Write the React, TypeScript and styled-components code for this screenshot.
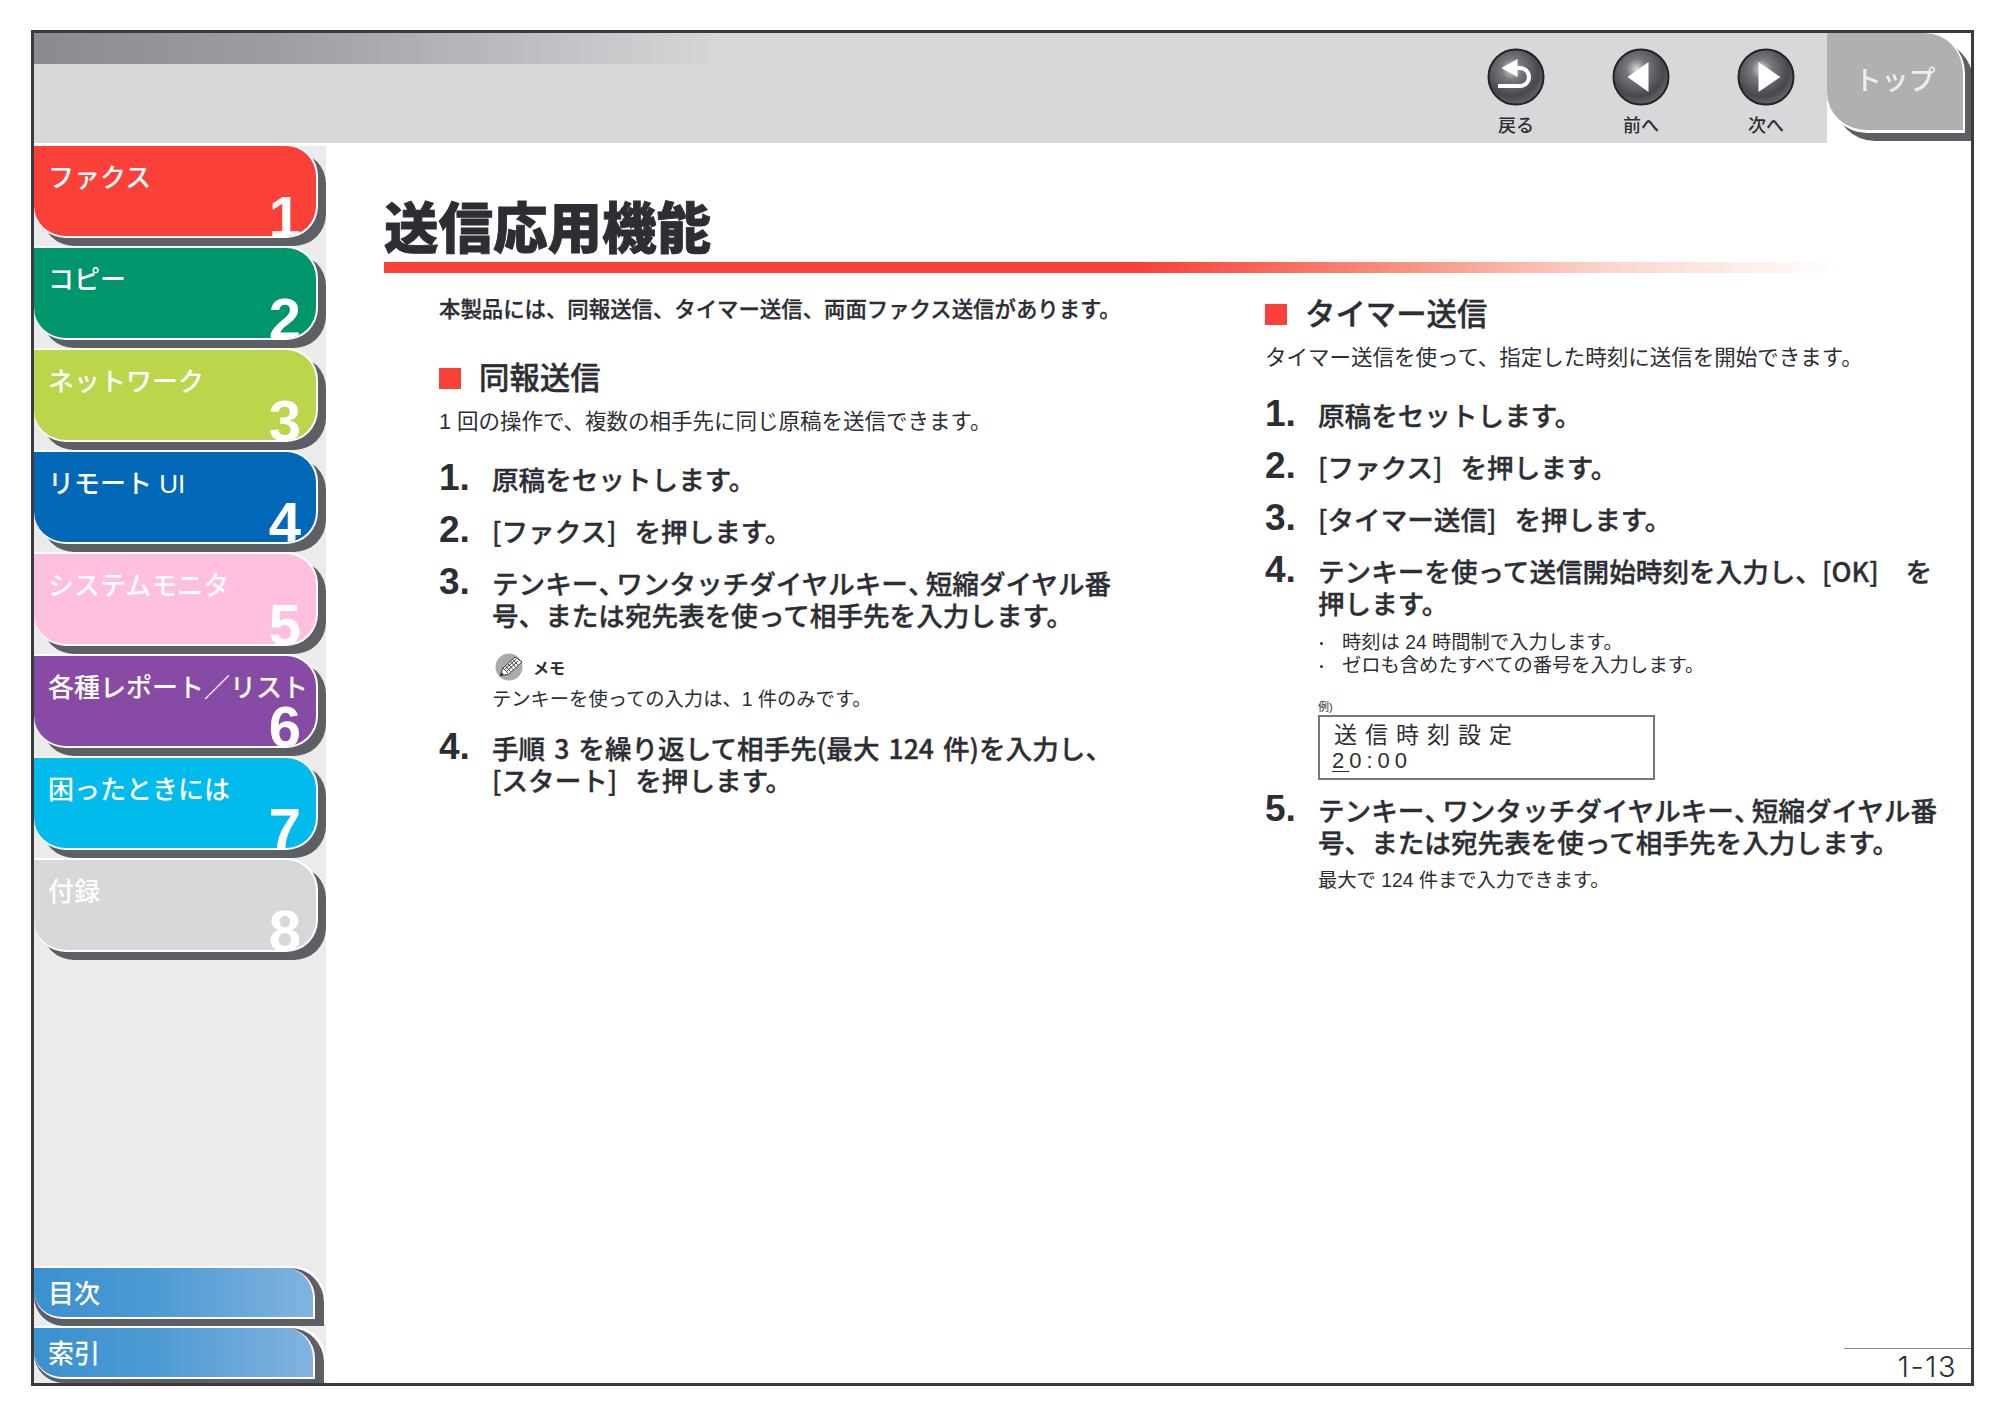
import React from "react";
import styled, { createGlobalStyle } from "styled-components";

const TEXT = "#2d2e33";
const SHADOW = "#5e5f65";
const FONT = `"Liberation Sans", "Noto Sans CJK JP", sans-serif`;
const CJK_FIRST = `"Noto Sans CJK JP", "Liberation Sans", sans-serif`;

const GlobalStyle = createGlobalStyle`
  html, body {
    margin: 0;
    padding: 0;
    background: #fff;
  }
  body {
    font-family: ${FONT};
    color: ${TEXT};
  }
`;

const Frame = styled.div`
  box-sizing: border-box;
  width: 1943px;
  height: 1356px;
  margin: 30px 0 0 31px;
  border: 3px solid #3a3b40;
  overflow: hidden;
  display: flex;
  flex-direction: column;
`;

const Header = styled.header`
  display: flex;
  height: 110px;
  flex-shrink: 0;
`;

const HeaderBar = styled.div`
  flex: 1;
  display: flex;
  justify-content: flex-end;
  gap: 3px;
  background-color: #d7d8da;
  background-image: linear-gradient(90deg, #8a8b8f 0%, #9d9ea2 35%, #d7d8da 100%);
  background-size: 695px 31px;
  background-repeat: no-repeat;
`;

const NavButton = styled.div`
  width: 122px;
  padding-top: 15px;
  display: flex;
  flex-direction: column;
  align-items: center;
`;

const NavLabel = styled.span`
  margin-top: 9px;
  font-size: 18px;
  line-height: 22px;
  font-weight: 500;
`;

const TopTab = styled.div`
  box-sizing: border-box;
  width: 138px;
  height: 100px;
  margin-right: 6px;
  padding-top: 31px;
  background: #afb0b2;
  border-right: 2px solid #fff;
  border-bottom: 3px solid #fff;
  border-radius: 0 40px 0 40px;
  box-shadow: 8px 8px 0 ${SHADOW};
  color: #eeeeef;
  font-size: 27px;
  line-height: 34px;
  font-weight: 500;
  text-align: center;
`;

const Body = styled.div`
  flex: 1;
  min-height: 0;
  display: flex;
  margin-top: 3px;
`;

const Sidebar = styled.nav`
  width: 292px;
  flex-shrink: 0;
  background: #ebebeb;
  display: flex;
  flex-direction: column;
  overflow: hidden;
`;

const ChapterTab = styled.a<{ $color: string }>`
  box-sizing: border-box;
  position: relative;
  display: block;
  width: 284px;
  height: 94px;
  margin: -2px 0 10px;
  flex-shrink: 0;
  padding: 15px 0 0 14px;
  background: ${(p) => p.$color};
  border: 2px solid #fff;
  border-left: 0;
  border-radius: 0 32px 32px 32px;
  box-shadow: 8px 8px 0 ${SHADOW};
  overflow: hidden;
  color: #fff;
  font-size: 26px;
  line-height: 34px;
  font-weight: 500;
  white-space: nowrap;
`;

const ChapterNumber = styled.span`
  position: absolute;
  right: 15px;
  top: 36px;
  font-family: "Liberation Sans", sans-serif;
  font-size: 58px;
  line-height: 70px;
  font-weight: 700;
`;

const BottomTabs = styled.div`
  margin-top: auto;
  display: flex;
  flex-direction: column;
  gap: 2px;
`;

const BottomShadow = styled.div<{ $height: number }>`
  box-sizing: border-box;
  width: 290px;
  height: ${(p) => p.$height}px;
  padding-right: 9px;
  background: ${SHADOW};
  border-radius: 0 34px 0 30px;
  box-shadow: 2px -2px 0 #fff;
  overflow: hidden;
`;

const BottomTab = styled.a`
  box-sizing: border-box;
  display: block;
  height: 51px;
  padding-left: 14px;
  background: linear-gradient(90deg, #3a91d0 0%, #4a99d3 40%, #82b3df 100%);
  border-right: 2px solid #fff;
  border-bottom: 2px solid #fff;
  border-radius: 0 30px 0 28px;
  color: #fff;
  font-size: 26px;
  line-height: 52px;
  font-weight: 500;
`;

const Main = styled.main`
  flex: 1;
  min-width: 0;
  display: flex;
  flex-direction: column;
  padding-left: 58px;
`;

const Title = styled.h1`
  margin: 54px 0 0;
  font-size: 54.5px;
  line-height: 60px;
  font-weight: 900;
  -webkit-text-stroke: 0.8px ${TEXT};
`;

const TitleRule = styled.div`
  width: 1456px;
  height: 11px;
  margin-top: 2px;
  background: linear-gradient(90deg, #fb4039 0%, #fb4039 52%, #f7927f 70%, #fcd5ca 84%, #ffffff 100%);
`;

const Columns = styled.div`
  display: grid;
  grid-template-columns: 826px 1fr;
  margin: 21px 0 0 55px;
`;

const Column = styled.section`
  min-width: 0;
`;

const Intro = styled.p`
  margin: 0 0 32px;
  font-size: 21.4px;
  line-height: 32px;
  font-weight: 500;
  -webkit-text-stroke: 0.3px ${TEXT};
  white-space: nowrap;
`;

const SectionHead = styled.h2`
  display: flex;
  align-items: center;
  gap: 18px;
  margin: 0;
  font-size: 30.4px;
  line-height: 40px;
  font-weight: 500;
  -webkit-text-stroke: 0.4px ${TEXT};
  &::before {
    content: "";
    width: 22px;
    height: 21px;
    background: #fb4039;
  }
`;

const Desc = styled.p`
  margin: 10px 0 0;
  font-size: 21.5px;
  line-height: 28px;
  white-space: nowrap;
`;

const Step = styled.div<{ $gap?: number }>`
  display: grid;
  grid-template-columns: 53px 1fr;
  margin-top: ${(p) => p.$gap ?? 20}px;
  font-family: ${CJK_FIRST};
  font-size: 26.6px;
  line-height: 32px;
  font-weight: 500;
  word-spacing: 3px;
  white-space: pre;
`;

const StepNumber = styled.span`
  font-family: "Liberation Sans", sans-serif;
  font-size: 37px;
  line-height: 28px;
  font-weight: 700;
`;

const StepText = styled.span`
  margin: -1px 0 1px;
  -webkit-text-stroke: 0.35px ${TEXT};
`;

const TightComma = styled.span`
  font-feature-settings: "halt";
  letter-spacing: 0.17em;
`;

const Indented = styled.div`
  margin-left: 53px;
`;

const MemoHead = styled.div`
  display: flex;
  align-items: center;
  gap: 10px;
  height: 28px;
  margin: 21px 0 0 3px;
  font-size: 16px;
  font-weight: 700;
`;

const Note = styled.p<{ $top?: number }>`
  margin: ${(p) => p.$top ?? 6}px 0 0;
  font-size: 19.3px;
  line-height: 26px;
  white-space: nowrap;
`;

const Bullets = styled.ul`
  margin: 12px 0 0;
  padding: 0;
  list-style: none;
`;

const Bullet = styled.li`
  position: relative;
  padding-left: 24px;
  font-size: 19.3px;
  line-height: 22.5px;
  white-space: nowrap;
  &::before {
    content: "";
    position: absolute;
    left: 2px;
    top: 10px;
    width: 3px;
    height: 3px;
    border-radius: 50%;
    background: ${TEXT};
  }
`;

const ExampleLabel = styled.div`
  margin-top: 23px;
  font-size: 11px;
  line-height: 14px;
`;

const Display = styled.div`
  box-sizing: border-box;
  width: 337px;
  height: 65px;
  margin-top: 1px;
  padding: 5px 0 0 14px;
  border: 2px solid #77787c;
  font-size: 23px;
  line-height: 26px;
  letter-spacing: 8px;
  white-space: nowrap;
`;

const DisplayTime = styled.div`
  font-size: 22px;
  line-height: 24px;
  letter-spacing: 5px;
  margin: 1px 0 0 -2px;
  u {
    text-underline-offset: 3px;
    text-decoration-thickness: 1px;
  }
`;

const PageFooter = styled.footer`
  box-sizing: border-box;
  align-self: flex-end;
  width: 127px;
  height: 35px;
  margin-top: auto;
  padding-right: 14px;
  border-top: 1px solid #8a8b8e;
  font-family: Inter, sans-serif;
  font-size: 29px;
  line-height: 35px;
  font-weight: 300;
  letter-spacing: 1.5px;
  text-align: right;
`;

const ButtonGlow = ({ id }: { id: string }) => (
  <defs>
    <radialGradient id={id} cx="0.42" cy="0.36" r="0.68">
      <stop offset="0" stopColor="#d9d9da" />
      <stop offset="0.28" stopColor="#77787c" />
      <stop offset="0.72" stopColor="#47484d" />
      <stop offset="1" stopColor="#6a6b70" />
    </radialGradient>
  </defs>
);

const BackIcon = () => (
  <svg width="58" height="58" viewBox="0 0 58 58">
    <ButtonGlow id="glow-back" />
    <circle cx="29" cy="29" r="27.5" fill="url(#glow-back)" stroke="#232428" strokeWidth="2" />
    <path d="M30.5 11 14.5 20 30.5 29Z" fill="#fff" />
    <path d="M28 20H33a9 9 0 0 1 0 18H11" fill="none" stroke="#fff" strokeWidth="4" />
  </svg>
);

const PrevIcon = () => (
  <svg width="58" height="58" viewBox="0 0 58 58">
    <ButtonGlow id="glow-prev" />
    <circle cx="29" cy="29" r="27.5" fill="url(#glow-prev)" stroke="#232428" strokeWidth="2" />
    <path d="M15.5 29 36.5 14V44Z" fill="#fff" />
  </svg>
);

const NextIcon = () => (
  <svg width="58" height="58" viewBox="0 0 58 58">
    <ButtonGlow id="glow-next" />
    <circle cx="29" cy="29" r="27.5" fill="url(#glow-next)" stroke="#232428" strokeWidth="2" />
    <path d="M43.5 29 21.5 14V44Z" fill="#fff" />
  </svg>
);

const MemoIcon = () => (
  <svg width="28" height="28" viewBox="0 0 28 28">
    <circle cx="14" cy="14" r="13.5" fill="#a9aaac" />
    <path d="M5 23 8 15 20 4 27 9 14 21Z" fill="#fff" stroke="#3a3b40" strokeWidth="1" />
    <path d="M8 15 13 20M10.500 13 15.500 18.500M13 11 18 16.500M15.500 8.500 20.500 14M18 6.500 23 12M9 17 21 6M11 19 23 8" stroke="#3a3b40" strokeWidth="1" fill="none" />
    <path d="M5 23 6.500 19 9 21.500Z" fill="#3a3b40" />
  </svg>
);

const chapters = [
  { label: "ファクス", color: "#fb4039" },
  { label: "コピー", color: "#00966c" },
  { label: "ネットワーク", color: "#bcd64c" },
  { label: "リモート UI", color: "#0068b7" },
  { label: "システムモニタ", color: "#ffbfdf" },
  { label: "各種レポート／リスト", color: "#884ba5" },
  { label: "困ったときには", color: "#00bbeb" },
  { label: "付録", color: "#d7d8da" },
];

const RecipientStepText = () => (
  <StepText>
    テンキー<TightComma>、</TightComma>ワンタッチダイヤルキー<TightComma>、</TightComma>短縮ダイヤル番
    <br />
    号、または宛先表を使って相手先を入力します。
  </StepText>
);

const App = () => {
  return (
    <>
      <GlobalStyle />
      <Frame>
        <Header>
          <HeaderBar>
            <NavButton>
              <BackIcon />
              <NavLabel>戻る</NavLabel>
            </NavButton>
            <NavButton>
              <PrevIcon />
              <NavLabel>前へ</NavLabel>
            </NavButton>
            <NavButton>
              <NextIcon />
              <NavLabel>次へ</NavLabel>
            </NavButton>
          </HeaderBar>
          <TopTab>トップ</TopTab>
        </Header>
        <Body>
          <Sidebar>
            {chapters.map((c, i) => (
              <ChapterTab key={c.label} $color={c.color}>
                {c.label}
                <ChapterNumber>{i + 1}</ChapterNumber>
              </ChapterTab>
            ))}
            <BottomTabs>
              <BottomShadow $height={58}>
                <BottomTab>目次</BottomTab>
              </BottomShadow>
              <BottomShadow $height={55}>
                <BottomTab>索引</BottomTab>
              </BottomShadow>
            </BottomTabs>
          </Sidebar>
          <Main>
            <Title>送信応用機能</Title>
            <TitleRule />
            <Columns>
              <Column>
                <Intro>本製品には、同報送信、タイマー送信、両面ファクス送信があります。</Intro>
                <SectionHead>同報送信</SectionHead>
                <Desc>1 回の操作で、複数の相手先に同じ原稿を送信できます。</Desc>
                <Step $gap={28}>
                  <StepNumber>1.</StepNumber>
                  <StepText>原稿をセットします。</StepText>
                </Step>
                <Step>
                  <StepNumber>2.</StepNumber>
                  <StepText>{"[ファクス]  を押します。"}</StepText>
                </Step>
                <Step>
                  <StepNumber>3.</StepNumber>
                  <RecipientStepText />
                </Step>
                <Indented>
                  <MemoHead>
                    <MemoIcon />
                    メモ
                  </MemoHead>
                  <Note>テンキーを使っての入力は、1 件のみです。</Note>
                </Indented>
                <Step>
                  <StepNumber>4.</StepNumber>
                  <StepText>
                    手順 3 を繰り返して相手先(最大 124 件)を入力し、
                    <br />
                    {"[スタート]  を押します。"}
                  </StepText>
                </Step>
              </Column>
              <Column>
                <SectionHead>タイマー送信</SectionHead>
                <Desc>タイマー送信を使って、指定した時刻に送信を開始できます。</Desc>
                <Step $gap={28}>
                  <StepNumber>1.</StepNumber>
                  <StepText>原稿をセットします。</StepText>
                </Step>
                <Step>
                  <StepNumber>2.</StepNumber>
                  <StepText>{"[ファクス]  を押します。"}</StepText>
                </Step>
                <Step>
                  <StepNumber>3.</StepNumber>
                  <StepText>{"[タイマー送信]  を押します。"}</StepText>
                </Step>
                <Step>
                  <StepNumber>4.</StepNumber>
                  <StepText>
                    {"テンキーを使って送信開始時刻を入力し、[OK]   を"}
                    <br />
                    押します。
                  </StepText>
                </Step>
                <Indented>
                  <Bullets>
                    <Bullet>時刻は 24 時間制で入力します。</Bullet>
                    <Bullet>ゼロも含めたすべての番号を入力します。</Bullet>
                  </Bullets>
                  <ExampleLabel>例)</ExampleLabel>
                  <Display>
                    送信時刻設定
                    <DisplayTime>
                      <u>2</u>0:00
                    </DisplayTime>
                  </Display>
                </Indented>
                <Step $gap={15}>
                  <StepNumber>5.</StepNumber>
                  <RecipientStepText />
                </Step>
                <Indented>
                  <Note $top={9}>最大で 124 件まで入力できます。</Note>
                </Indented>
              </Column>
            </Columns>
            <PageFooter>1-13</PageFooter>
          </Main>
        </Body>
      </Frame>
    </>
  );
};

export default App;
